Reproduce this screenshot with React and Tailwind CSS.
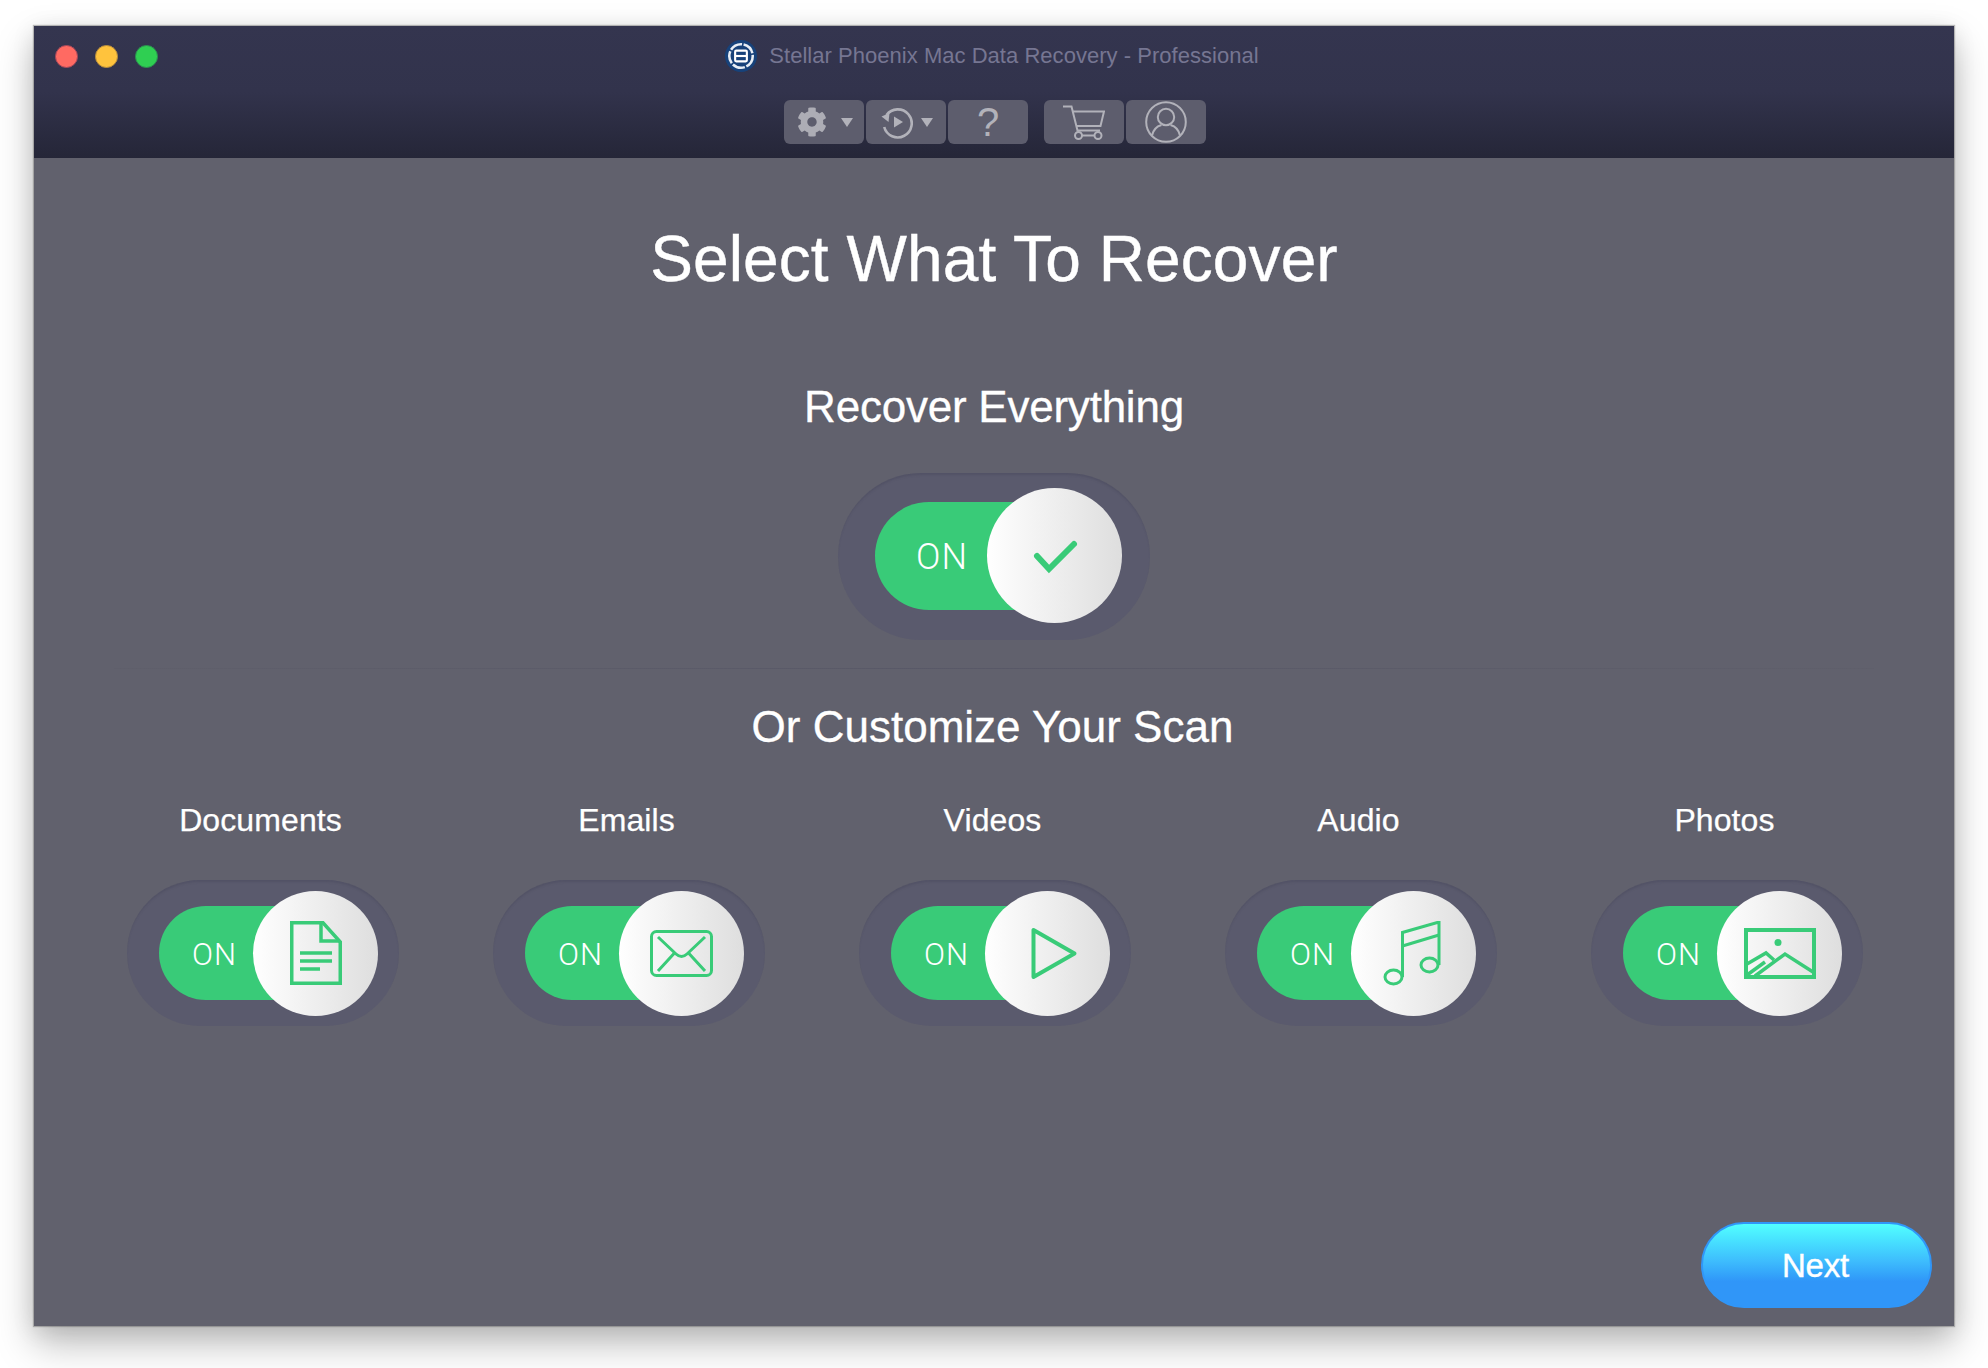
import React from "react";
import { FaCog } from "react-icons/fa";

const Caret = () => (
  <svg width="12" height="9" viewBox="0 0 12 9" className="flex-none"><path d="M0 0H12L6 9Z" fill="#b2b2ba" /></svg>
);

const Logo = () => (
  <svg width="32" height="32" viewBox="0 0 30 30" className="flex-none">
    <circle cx="15" cy="15" r="15" fill="#17427a" />
    <circle cx="15" cy="15" r="11" fill="none" stroke="#e8eef5" strokeWidth="2.4" strokeDasharray="12 1.5" />
    <rect x="9.5" y="10" width="11" height="10" rx="1" fill="none" stroke="#fff" strokeWidth="2" />
    <path d="M9.5 15H20.5" stroke="#fff" strokeWidth="2" />
  </svg>
);

const Btn = ({ children, className = "" }) => (
  <div className={"w-[80px] h-[44px] rounded-[6px] bg-[#5d5d6d] flex items-center justify-center " + className}>{children}</div>
);

const IconDoc = () => (
  <svg width="52" height="64" viewBox="0 0 52 64" fill="none" stroke="#39cb78" strokeWidth="3.5">
    <path d="M1.75 1.75H33L50.25 21V62.25H1.75Z" />
    <path d="M31 2V20H50" />
    <path d="M10 32H42M10 40H42M10 48H30" />
  </svg>
);
const IconMail = () => (
  <svg width="63" height="47" viewBox="0 0 63 47" fill="none" stroke="#39cb78" strokeWidth="3">
    <rect x="1.5" y="1.5" width="60" height="44" rx="5" />
    <path d="M8 7L26 24Q31.5 29 37 24L55 7" />
    <path d="M8 41L24.5 23M55 41L38.5 23" />
  </svg>
);
const IconPlay = () => (
  <svg width="47" height="53" viewBox="0 0 47 53" fill="none" stroke="#39cb78" strokeWidth="4" strokeLinejoin="round" className="translate-x-[7px]">
    <path d="M2.5 3V50L43.5 26.5Z" />
  </svg>
);
const IconMusic = () => (
  <svg width="60" height="65" viewBox="0 0 58 65" fill="none" stroke="#39cb78" strokeWidth="3" className="translate-x-[-2px]">
    <ellipse cx="10.5" cy="56" rx="8.5" ry="7" />
    <ellipse cx="46.5" cy="44" rx="8.5" ry="7" />
    <path d="M19.5 56V11.5L56 1V44" />
    <path d="M19.5 25L56 14" />
  </svg>
);
const IconPhoto = () => (
  <svg width="72" height="51" viewBox="0 0 72 51" fill="none" stroke="#39cb78" strokeWidth="4">
    <rect x="2" y="2" width="68" height="47" />
    <circle cx="34" cy="14.5" r="3.5" fill="#39cb78" stroke="none" />
    <path d="M11 48L41 26L69 44" strokeWidth="3.5" />
    <path d="M3 36L22 25L30 32" strokeWidth="3.5" />
    <path d="M3 47L21 34" strokeWidth="3.5" />
  </svg>
);

const Toggle = ({ big, icon }) =>
  big ? (
    <div className="w-[312px] h-[167px] rounded-full bg-[#5a5a6d] shadow-[inset_0_3px_2px_-1px_rgba(70,70,90,0.35)] flex items-center pl-[37px]">
      <div className="w-[180px] h-[108px] rounded-l-full bg-[#39cb78] flex items-center pl-[41px] mt-[-2px]">
        <span className="text-[36px] font-light text-white leading-none font-['Roboto',sans-serif] mt-[3px] tracking-[1px]">ON</span>
      </div>
      <div className="relative flex-none w-[135px] h-[135px] ml-[-68px] mt-[-2px] rounded-full bg-gradient-to-r from-white to-[#dedede] flex items-center justify-center">
        {icon}
      </div>
    </div>
  ) : (
    <div className="w-[272px] h-[146px] rounded-full bg-[#5a5a6d] shadow-[inset_0_3px_2px_-1px_rgba(70,70,90,0.35)] flex items-center pl-[32px]">
      <div className="w-[156px] h-[94px] rounded-l-full bg-[#39cb78] flex items-center pl-[33px]">
        <span className="text-[31px] font-light text-white leading-none font-['Roboto',sans-serif] mt-[3px] tracking-[1px]">ON</span>
      </div>
      <div className="relative flex-none w-[125px] h-[125px] ml-[-62px] rounded-full bg-gradient-to-r from-white to-[#dedede] flex items-center justify-center">
        {icon}
      </div>
    </div>
  );

const items = [
  ["Documents", <IconDoc />],
  ["Emails", <IconMail />],
  ["Videos", <IconPlay />],
  ["Audio", <IconMusic />],
  ["Photos", <IconPhoto />],
];

export default function App() {
  return (
    <div className="w-[1988px] h-[1368px] bg-white overflow-hidden pt-[26px] pl-[34px] font-['Liberation_Sans',Arial,sans-serif]">
      <div className="w-[1920px] h-[1300px] flex flex-col bg-[#61616d] shadow-[0_0_1px_1px_rgba(90,90,90,0.4),0_18px_36px_rgba(0,0,0,0.26),0_4px_22px_rgba(0,0,0,0.1)]">
        <header className="h-[132px] flex-none bg-gradient-to-b from-[#34354f] via-[#32334c] to-[#252638] flex flex-col">
          <div className="grid grid-cols-[1fr_auto_1fr] items-center h-[60px] flex-none">
            <div className="flex items-center gap-[17px] pl-[21px]">
              <span className="w-[23px] h-[23px] rounded-full bg-[#ff6a62] border border-[#a5475a]" />
              <span className="w-[23px] h-[23px] rounded-full bg-[#ffc33d] border border-[#b98d3c]" />
              <span className="w-[23px] h-[23px] rounded-full bg-[#2fcf52] border border-[#2b8f50]" />
            </div>
            <div className="flex items-center gap-[12px] translate-x-[-2px]">
              <Logo />
              <span className="text-[22px] text-[#767692] leading-none tracking-[0.03px]">Stellar Phoenix Mac Data Recovery - Professional</span>
            </div>
            <div />
          </div>
          <div className="flex justify-center mt-[14px] pl-[2px]">
            <div className="flex gap-[2px]">
              <Btn className="gap-[14px] pl-[2px]"><FaCog size={30} color="#adadb5" /><Caret /></Btn>
              <Btn className="gap-[7px]">
                <svg width="34" height="34" viewBox="0 0 34 34" fill="none" stroke="#b2b2ba" strokeWidth="2.6" className="flex-none">
                  <path d="M6.5 10A14 14 0 1 1 4.2 22" />
                  <path d="M1.5 11.5L8.5 17L9.5 8Z" fill="#b2b2ba" stroke="none" />
                  <path d="M14 11.5L23 17L14 22.5Z" fill="#b2b2ba" stroke="none" />
                </svg>
                <Caret />
              </Btn>
              <Btn><span className="text-[40px] leading-none text-[#b2b2ba]">?</span></Btn>
            </div>
            <div className="flex gap-[2px] ml-[16px]">
              <Btn>
                <svg width="42" height="35" viewBox="0 0 42 35" fill="none" stroke="#b2b2ba" strokeWidth="2" className="flex-none">
                  <path d="M0 1.5H8.5L14.5 25.5H37" />
                  <path d="M9.5 6.5H41L37.5 21H13" />
                  <circle cx="15.5" cy="30.5" r="3.5" />
                  <circle cx="35" cy="30.5" r="3.5" />
                  <path d="M19 30.5H31.5" />
                </svg>
              </Btn>
              <Btn>
                <svg width="42" height="42" viewBox="0 0 42 42" fill="none" stroke="#b2b2ba" strokeWidth="2" className="flex-none">
                  <circle cx="21" cy="21" r="19.8" />
                  <circle cx="21" cy="16" r="8.2" />
                  <path d="M7 34.5C8.5 27.5 13 25 16.5 24M35 34.5C33.5 27.5 29 25 25.5 24" />
                </svg>
              </Btn>
            </div>
          </div>
        </header>

        <main className="flex-1 flex flex-col text-white">
          <h1 className="mt-[61px] text-[64px] leading-[80px] text-center tracking-[0.1px] [-webkit-text-stroke:0.4px_white]">Select What To Recover</h1>
          <h2 className="mt-[80px] text-[44px] leading-[56px] text-center tracking-[-0.23px] [-webkit-text-stroke:0.3px_white]">Recover Everything</h2>
          <div className="mt-[38px] flex justify-center">
            <Toggle
              big
              icon={
                <svg width="48" height="36" viewBox="0 0 48 36" fill="none" stroke="#39cb78" strokeWidth="6" strokeLinecap="round" className="translate-y-[1px]">
                  <path d="M6 17L18 30L43 5" />
                </svg>
              }
            />
          </div>
          <div className="mt-[28px] h-px mx-[80px] bg-gradient-to-r from-[#5f5f6b] via-[#585867] to-[#5f5f6b]" />
          <h2 className="mt-[30px] text-[44px] leading-[56px] text-center pr-[3px] [-webkit-text-stroke:0.3px_white]">Or Customize Your Scan</h2>
          <div className="mt-[45px] flex gap-[94px] pl-[93px]">
            {items.map(([label, icon]) => (
              <div key={label} className="w-[272px] flex-none flex flex-col">
                <div className="text-[32px] leading-[40px] text-center pr-[5px] tracking-[0.1px] [-webkit-text-stroke:0.25px_white]">{label}</div>
                <div className="mt-[40px]"><Toggle icon={icon} /></div>
              </div>
            ))}
          </div>
          <div className="mt-auto self-end mr-[22px] mb-[18px] w-[231px] h-[86px] rounded-full border-2 border-[#3096f8] bg-gradient-to-b from-[#52ffff] via-[#3ebdfd] via-45% to-[#3096f8] to-70% flex items-center justify-center">
            <span className="text-[33px] leading-none tracking-[-0.2px] pr-[2px] [-webkit-text-stroke:0.4px_white]">Next</span>
          </div>
        </main>
      </div>
    </div>
  );
}
